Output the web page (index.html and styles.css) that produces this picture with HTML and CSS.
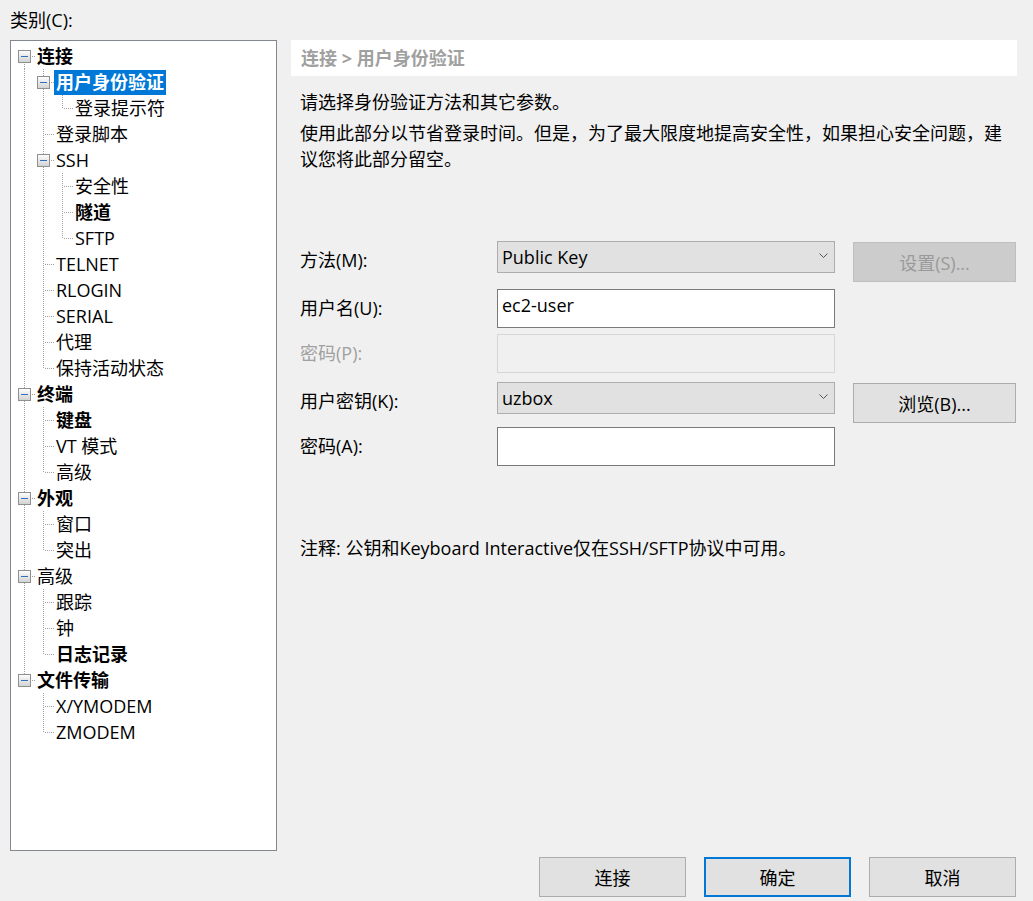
FILE: index.html
```html
<!DOCTYPE html>
<html lang="zh-CN">
<head>
<meta charset="utf-8">
<title>会话选项</title>
<link rel="stylesheet" href="styles.css">
</head>
<body>
<div class="dialog">
  <div class="cat-label">类别(C):</div>
  <div class="main">
    <ul class="tree">
      <li class="row"><span class="c fb"><span class="bx"></span></span><span class="lbl b">连接</span></li>
      <li class="row"><span class="c v"></span><span class="c tb"><span class="bx"></span></span><span class="lbl b sel">用户身份验证</span></li>
      <li class="row"><span class="c v"></span><span class="c v"></span><span class="c l"></span><span class="lbl">登录提示符</span></li>
      <li class="row"><span class="c v"></span><span class="c t"></span><span class="lbl">登录脚本</span></li>
      <li class="row"><span class="c v"></span><span class="c tb"><span class="bx"></span></span><span class="lbl">SSH</span></li>
      <li class="row"><span class="c v"></span><span class="c v"></span><span class="c t"></span><span class="lbl">安全性</span></li>
      <li class="row"><span class="c v"></span><span class="c v"></span><span class="c t"></span><span class="lbl b">隧道</span></li>
      <li class="row"><span class="c v"></span><span class="c v"></span><span class="c l"></span><span class="lbl">SFTP</span></li>
      <li class="row"><span class="c v"></span><span class="c t"></span><span class="lbl">TELNET</span></li>
      <li class="row"><span class="c v"></span><span class="c t"></span><span class="lbl">RLOGIN</span></li>
      <li class="row"><span class="c v"></span><span class="c t"></span><span class="lbl">SERIAL</span></li>
      <li class="row"><span class="c v"></span><span class="c t"></span><span class="lbl">代理</span></li>
      <li class="row"><span class="c v"></span><span class="c l"></span><span class="lbl">保持活动状态</span></li>
      <li class="row"><span class="c tb"><span class="bx"></span></span><span class="lbl b">终端</span></li>
      <li class="row"><span class="c v"></span><span class="c t"></span><span class="lbl b">键盘</span></li>
      <li class="row"><span class="c v"></span><span class="c t"></span><span class="lbl">VT 模式</span></li>
      <li class="row"><span class="c v"></span><span class="c l"></span><span class="lbl">高级</span></li>
      <li class="row"><span class="c tb"><span class="bx"></span></span><span class="lbl b">外观</span></li>
      <li class="row"><span class="c v"></span><span class="c t"></span><span class="lbl">窗口</span></li>
      <li class="row"><span class="c v"></span><span class="c l"></span><span class="lbl">突出</span></li>
      <li class="row"><span class="c tb"><span class="bx"></span></span><span class="lbl">高级</span></li>
      <li class="row"><span class="c v"></span><span class="c t"></span><span class="lbl">跟踪</span></li>
      <li class="row"><span class="c v"></span><span class="c t"></span><span class="lbl">钟</span></li>
      <li class="row"><span class="c v"></span><span class="c l"></span><span class="lbl b">日志记录</span></li>
      <li class="row"><span class="c lb"><span class="bx"></span></span><span class="lbl b">文件传输</span></li>
      <li class="row"><span class="c"></span><span class="c t"></span><span class="lbl">X/YMODEM</span></li>
      <li class="row"><span class="c"></span><span class="c l"></span><span class="lbl">ZMODEM</span></li>
    </ul>

    <div class="panel">
      <div class="panel-head">连接 &gt; 用户身份验证</div>
      <p class="p1">请选择身份验证方法和其它参数。</p>
      <p class="p2">使用此部分以节省登录时间。但是，为了最大限度地提高安全性，如果担心安全问题，建议您将此部分留空。</p>

      <div class="form">
        <div class="frow r1">
          <label class="flabel">方法(M):</label>
          <div class="select"><span>Public Key</span><svg class="chev" width="9" height="5" viewBox="0 0 9 5"><path d="M0.5 0.5 L4.5 4.5 L8.5 0.5" fill="none" stroke="#555" stroke-width="1"/></svg></div>
          <button class="btn side disabled">设置(S)...</button>
        </div>
        <div class="frow r2">
          <label class="flabel">用户名(U):</label>
          <div class="input">ec2-user</div>
        </div>
        <div class="frow r3">
          <label class="flabel dis">密码(P):</label>
          <div class="input off"></div>
        </div>
        <div class="frow r4">
          <label class="flabel">用户密钥(K):</label>
          <div class="select"><span>uzbox</span><svg class="chev" width="9" height="5" viewBox="0 0 9 5"><path d="M0.5 0.5 L4.5 4.5 L8.5 0.5" fill="none" stroke="#555" stroke-width="1"/></svg></div>
          <button class="btn side">浏览(B)...</button>
        </div>
        <div class="frow r5">
          <label class="flabel">密码(A):</label>
          <div class="input"></div>
        </div>
      </div>

      <p class="note">注释: 公钥和Keyboard Interactive仅在SSH/SFTP协议中可用。</p>
    </div>
  </div>

  <div class="footer">
    <button class="btn foot">连接</button>
    <button class="btn foot default">确定</button>
    <button class="btn foot">取消</button>
  </div>
</div>
</body>
</html>
```

FILE: styles.css
```css
html, body {
  margin: 0;
  padding: 0;
  background: #f0f0f0;
}

body {
  font-family: "Open Sans", "Noto Sans CJK SC", sans-serif;
  font-size: 18px;
  color: #000;
}

.dialog {
  box-sizing: border-box;
  height: 901px;
  padding: 7px 16px 0 10px;
  display: flex;
  flex-direction: column;
}

.cat-label {
  line-height: 26px;
  margin-bottom: 7px;
}

.main {
  display: flex;
  gap: 14px;
  height: 811px;
}

/* ---------- tree ---------- */
.tree {
  box-sizing: border-box;
  width: 267px;
  height: 811px;
  margin: 0;
  padding: 2px 0 0 5px;
  list-style: none;
  background: #fff;
  border: 1px solid #828790;
}

.row {
  display: flex;
  align-items: center;
  height: 26px;
}

.c {
  flex: none;
  width: 19px;
  height: 26px;
  display: flex;
  align-items: center;
  background-repeat: no-repeat;
}

/* dotted line pieces */
.v, .t, .tb {
  background-image: repeating-linear-gradient(to bottom, #a0a0a0 0 1px, transparent 1px 2px);
  background-position: 8px 0;
  background-size: 1px 26px;
}

.t, .l, .tb, .lb, .fb {
  background-image:
    repeating-linear-gradient(to bottom, #a0a0a0 0 1px, transparent 1px 2px),
    repeating-linear-gradient(to right, #a0a0a0 0 1px, transparent 1px 2px);
  background-repeat: no-repeat, no-repeat;
}

.t, .tb {
  background-position: 8px 0, 10px 13px;
  background-size: 1px 26px, 9px 1px;
}

.l, .lb {
  background-position: 8px 0, 10px 13px;
  background-size: 1px 13px, 9px 1px;
}

.fb {
  background-position: 8px 13px, 10px 13px;
  background-size: 1px 13px, 9px 1px;
}

.bx {
  box-sizing: border-box;
  width: 13px;
  height: 13px;
  margin-left: 2px;
  border: 1px solid #8f8f8f;
  background:
    linear-gradient(#2f6fc0, #2f6fc0) center / 7px 1px no-repeat,
    linear-gradient(#fcfcfc, #d3d3d3);
}

.lbl {
  padding: 0 2px;
  line-height: 25px;
  white-space: nowrap;
}

.lbl.b {
  font-weight: 700;
}

.lbl.sel {
  background: #0078d7;
  color: #fff;
}

/* ---------- right panel ---------- */
.panel {
  width: 726px;
  display: flex;
  flex-direction: column;
}

.panel-head {
  height: 36px;
  line-height: 36px;
  padding-left: 10px;
  background: #fff;
  color: #a0a0a0;
  font-weight: 700;
}

.p1, .p2, .note {
  margin: 0;
  padding-left: 9px;
  line-height: 26px;
}

.p1 { margin-top: 13px; }
.p2 { margin-top: 5px; padding-right: 10px; }

.form {
  margin-top: 69px;
  padding-left: 9px;
  display: flex;
  flex-direction: column;
}

.frow {
  display: flex;
  align-items: flex-start;
}

.r2 { margin-top: 7px; }
.r3 { margin-top: 6px; }
.r4 { margin-top: 9px; }
.r5 { margin-top: 4px; }

.flabel {
  width: 197px;
  flex: none;
  margin-top: 6px;
  line-height: 26px;
}

.flabel.dis {
  color: #a0a0a0;
}

.select {
  box-sizing: border-box;
  width: 338px;
  height: 32px;
  padding: 0 6px 0 4px;
  display: flex;
  align-items: center;
  justify-content: space-between;
  background: #e1e1e1;
  border: 1px solid #adadad;
  line-height: 30px;
}

.chev {
  flex: none;
  margin-bottom: 4px;
}

.input {
  box-sizing: border-box;
  width: 338px;
  height: 39px;
  padding: 2px 0 0 4px;
  line-height: 26px;
  background: #fff;
  border: 1px solid #7a7a7a;
}

.input.off {
  background: #f0f0f0;
  border-color: #d6d6d6;
}

.btn {
  box-sizing: border-box;
  height: 40px;
  padding: 0;
  font: inherit;
  color: #000;
  background: #e1e1e1;
  border: 1px solid #adadad;
}

.side {
  width: 163px;
  margin: 1px 0 0 18px;
}

.btn.disabled {
  background: #cccccc;
  border-color: #bfbfbf;
  color: #9a9a9a;
}

.note {
  margin-top: 69px;
}

/* ---------- footer ---------- */
.footer {
  display: flex;
  justify-content: flex-end;
  gap: 18px;
  margin-top: 6px;
  padding-right: 1px;
}

.foot {
  width: 147px;
}

.foot.default {
  border: 2px solid #0078d7;
}
```
